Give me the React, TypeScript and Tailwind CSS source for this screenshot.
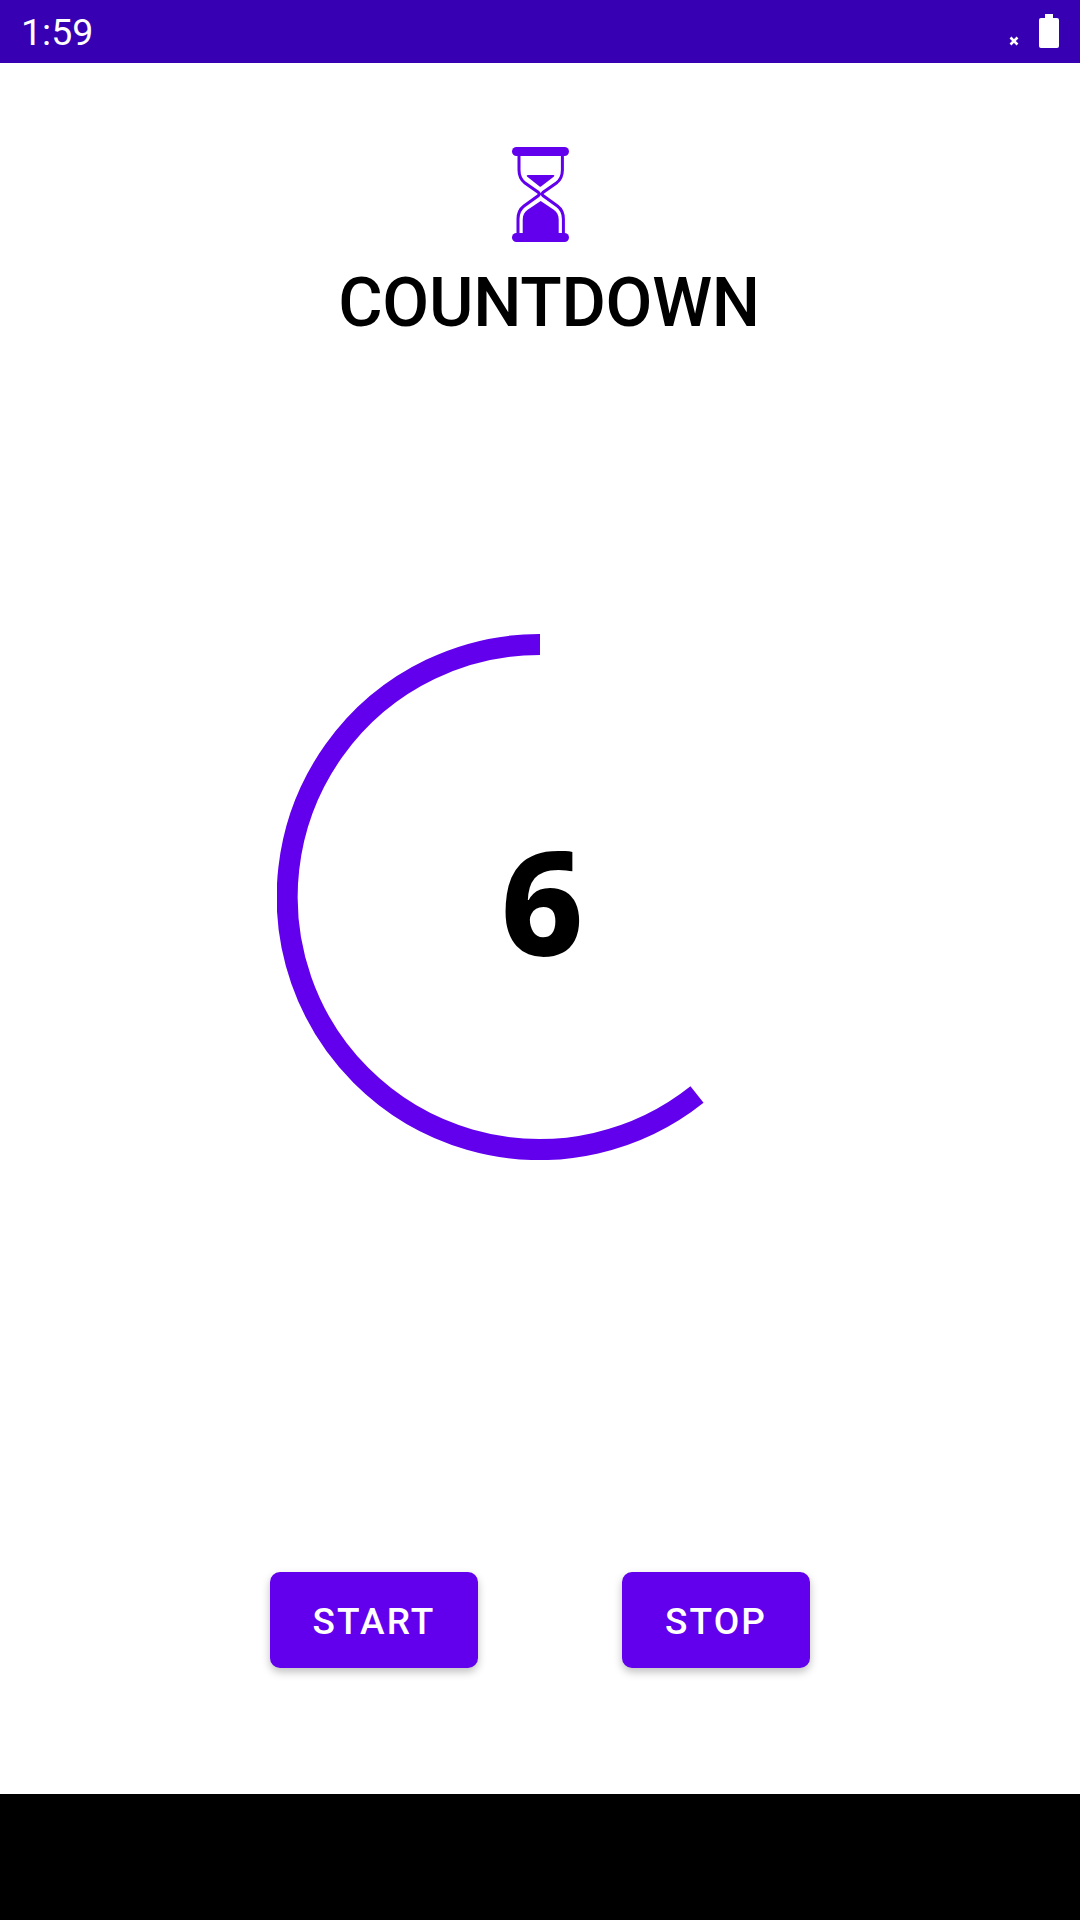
import React from "react";

function Hourglass() {
  return (
    <svg width="80" height="110" viewBox="0 0 80 110" fill="none">
      <rect x="12" y="7" width="57" height="9" rx="4.5" fill="#6200EE" />
      <rect x="12" y="93" width="57" height="9" rx="4.5" fill="#6200EE" />
      {/* glass outline */}
      <path
        d="M19 15V30C19 36 21 40 25 43L38.5 52.5Q40 54 38.5 55.5L24 66C20 69 18 73 18 79V94M62.4 15V30C62.4 36 60.4 40 56.4 43L42.9 52.5Q41.4 54 42.9 55.5L57.4 66C61.4 69 63.4 73 63.4 79V94"
        stroke="#6200EE"
        strokeWidth="3"
      />
      {/* sand */}
      <path d="M28 35H53.5Q55 35 54 36.5L41 46.5Q40.4 47 39.6 46.5L27 36.5Q26 35 28 35Z" fill="#6200EE" />
      <path d="M22.7 94V80C22.7 75 24.5 72 28 69.5L40.7 61L53.4 69.5C57 72 58.7 75 58.7 80V94Z" fill="#6200EE" />
    </svg>
  );
}

function StatusIcons() {
  return (
    <div className="flex items-end gap-5 h-[34px] mt-[14px]">
      <svg width="10" height="10" viewBox="0 0 10 10" className="mb-[2px]">
        <path d="M1.5 1.5L8.5 8.5M8.5 1.5L1.5 8.5" stroke="#fff" strokeWidth="2.6" />
      </svg>
      <svg width="20" height="34" viewBox="0 0 20 34">
        <path d="M6 0H14V4H18Q20 4 20 6V32Q20 34 18 34H2Q0 34 0 32V6Q0 4 2 4H6Z" fill="#fff" />
      </svg>
    </div>
  );
}

function Ring() {
  return (
    <div className="relative w-[526px] h-[526px]">
      <svg width="526" height="526" viewBox="0 0 526 526" fill="none">
        <path d="M263 10.5A252.5 252.5 0 1 0 420 460.5" stroke="#6200EE" strokeWidth="21" />
      </svg>
      <div className="absolute inset-0 flex items-center justify-center pt-[5px] pl-[4px] text-[144px] font-extrabold text-black font-['Noto_Sans',sans-serif]">
        6
      </div>
    </div>
  );
}

export default function App() {
  return (
    <div className="flex flex-col w-[1080px] h-[1920px] bg-white font-['Roboto',sans-serif]">
      {/* Status bar */}
      <div className="flex justify-between items-start h-[63px] pl-[21px] pr-[21px] bg-[#3700B3] text-white">
        <span className="text-[37.5px] leading-[65px]">1:59</span>
        <StatusIcons />
      </div>

      <div className="flex flex-col flex-1 items-center">
        <div className="mt-[77px] -ml-px">
          <Hourglass />
        </div>
        <h1 className="mt-[11px] pl-[18px] text-[68px] leading-[84px] tracking-[-0.25px] font-medium text-black">COUNTDOWN</h1>

        <div className="mt-[289px]">
          <Ring />
        </div>

        <div className="flex gap-[144px] mt-[412px]">
          <button className="h-[96px] w-[208px] pt-[3px] rounded-[10px] bg-[#6200EE] text-white text-[37px] font-medium tracking-[2.1px] shadow-[0_4px_8px_rgba(0,0,0,0.25)]">
            START
          </button>
          <button className="h-[96px] w-[188px] pt-[3px] rounded-[10px] bg-[#6200EE] text-white text-[37px] font-medium tracking-[2.1px] shadow-[0_4px_8px_rgba(0,0,0,0.25)]">
            STOP
          </button>
        </div>
      </div>

      {/* Nav bar area */}
      <div className="h-[126px] bg-black" />
    </div>
  );
}
